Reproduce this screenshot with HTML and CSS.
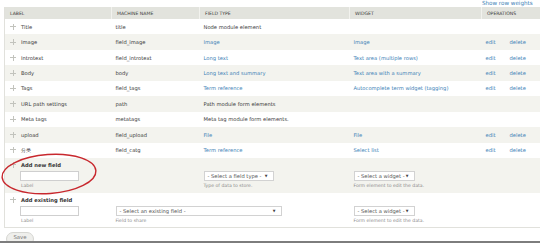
FILE: index.html
```html
<!DOCTYPE html>
<html>
<head>
  <title>Manage fields</title>
  <link rel="stylesheet" href="styles.css">
</head>
<body>
  <div class="page">
    <div class="weights-toggle"><a href="#">Show row weights</a></div>

    <table class="fields">
      <colgroup>
        <col class="c-label">
        <col class="c-machine">
        <col class="c-type">
        <col class="c-widget">
        <col class="c-edit">
        <col class="c-delete">
      </colgroup>
      <thead>
        <tr>
          <th>Label</th>
          <th>Machine name</th>
          <th>Field type</th>
          <th>Widget</th>
          <th colspan="2">Operations</th>
        </tr>
      </thead>
      <tbody>
        <tr class="odd">
          <td><span class="handle"></span>Title</td>
          <td>title</td>
          <td>Node module element</td>
          <td></td><td></td><td></td>
        </tr>
        <tr class="even">
          <td><span class="handle"></span>Image</td>
          <td>field_image</td>
          <td><a href="#">Image</a></td>
          <td><a href="#">Image</a></td>
          <td><a href="#">edit</a></td>
          <td><a href="#">delete</a></td>
        </tr>
        <tr class="odd">
          <td><span class="handle"></span>Introtext</td>
          <td>field_introtext</td>
          <td><a href="#">Long text</a></td>
          <td><a href="#">Text area (multiple rows)</a></td>
          <td><a href="#">edit</a></td>
          <td><a href="#">delete</a></td>
        </tr>
        <tr class="even">
          <td><span class="handle"></span>Body</td>
          <td>body</td>
          <td><a href="#">Long text and summary</a></td>
          <td><a href="#">Text area with a summary</a></td>
          <td><a href="#">edit</a></td>
          <td><a href="#">delete</a></td>
        </tr>
        <tr class="odd">
          <td><span class="handle"></span>Tags</td>
          <td>field_tags</td>
          <td><a href="#">Term reference</a></td>
          <td><a href="#">Autocomplete term widget (tagging)</a></td>
          <td><a href="#">edit</a></td>
          <td><a href="#">delete</a></td>
        </tr>
        <tr class="even">
          <td><span class="handle"></span>URL path settings</td>
          <td>path</td>
          <td>Path module form elements</td>
          <td></td><td></td><td></td>
        </tr>
        <tr class="odd">
          <td><span class="handle"></span>Meta tags</td>
          <td>metatags</td>
          <td>Meta tag module form elements.</td>
          <td></td><td></td><td></td>
        </tr>
        <tr class="even">
          <td><span class="handle"></span>upload</td>
          <td>field_upload</td>
          <td><a href="#">File</a></td>
          <td><a href="#">File</a></td>
          <td><a href="#">edit</a></td>
          <td><a href="#">delete</a></td>
        </tr>
        <tr class="odd">
          <td><span class="handle"></span>分类</td>
          <td>field_catg</td>
          <td><a href="#">Term reference</a></td>
          <td><a href="#">Select list</a></td>
          <td><a href="#">edit</a></td>
          <td><a href="#">delete</a></td>
        </tr>

        <tr class="even add-row">
          <td>
            <div class="add-title"><span class="handle"></span>Add new field</div>
            <div class="add-input"></div>
            <div class="desc">Label</div>
          </td>
          <td></td>
          <td>
            <div class="spacer"></div>
            <div class="select type">- Select a field type -<span class="arrow">▼</span></div>
            <div class="desc">Type of data to store.</div>
          </td>
          <td colspan="3">
            <div class="spacer"></div>
            <div class="select">- Select a widget -<span class="arrow">▼</span></div>
            <div class="desc">Form element to edit the data.</div>
          </td>
        </tr>
        <tr class="odd add-row existing">
          <td>
            <div class="add-title"><span class="handle"></span>Add existing field</div>
            <div class="add-input"></div>
            <div class="desc">Label</div>
          </td>
          <td colspan="2">
            <div class="spacer"></div>
            <div class="select wide">- Select an existing field -<span class="arrow">▼</span></div>
            <div class="desc">Field to share</div>
          </td>
          <td colspan="3">
            <div class="spacer"></div>
            <div class="select">- Select a widget -<span class="arrow">▼</span></div>
            <div class="desc">Form element to edit the data.</div>
          </td>
        </tr>
      </tbody>
    </table>

    <button class="save">Save</button>

    <svg class="highlight" width="100" height="46" viewBox="0 0 100 46">
      <ellipse cx="49" cy="23" rx="47" ry="19.5" transform="rotate(-4 49 23)" fill="none" stroke="#c8282e" stroke-width="1.4"/>
    </svg>
  </div>
</body>
</html>
```

FILE: styles.css
```css
body {
  margin: 0;
  font-family: "DejaVu Sans", Verdana, sans-serif;
  font-size: 5.2px;
  color: #3b3b3b;
  background-color: #fff;
}

a {
  color: #3d82b6;
  text-decoration: none;
}

.page {
  position: relative;
  height: 241px;
  overflow: hidden;
  border-bottom: 2px solid #7d7d7d;
}

.weights-toggle {
  height: 7px;
  padding-left: 482px;
  white-space: nowrap;
  line-height: 7px;
  font-size: 5.6px;
}

.fields {
  margin-left: 4px;
  width: 536px;
  table-layout: fixed;
  border-collapse: collapse;
  border-left: 1px solid #e1e1dc;
  border-bottom: 1px solid #e1e1dc;
}

.c-label { width: 107px; }
.c-machine { width: 88px; }
.c-type { width: 150px; }
.c-widget { width: 132px; }
.c-edit { width: 24px; }
.c-delete { width: 35px; }

th {
  height: 12px;
  padding: 0 5px;
  text-align: left;
  font-weight: normal;
  font-size: 4.6px;
  text-transform: uppercase;
  color: #3a3a3a;
  background-color: #e2e3dd;
  border-left: 1px solid #f2f2ee;
}

th:first-child {
  border-left: none;
}

td {
  height: 15.44px;
  padding: 0 4px;
  white-space: nowrap;
  overflow: hidden;
}

tr.odd td {
  background-color: #fff;
}

tr.even td {
  background-color: #f3f3ee;
}

.handle {
  display: inline-block;
  position: relative;
  width: 6px;
  height: 6px;
  margin: 0 5px 0 1px;
  vertical-align: -1px;
}

.handle::before,
.handle::after {
  content: "";
  position: absolute;
  background-color: #c2c3bd;
}

.handle::before {
  left: 0;
  top: 2.5px;
  width: 6px;
  height: 1px;
}

.handle::after {
  left: 2.5px;
  top: 0;
  width: 1px;
  height: 6px;
}

.add-row td {
  height: auto;
  vertical-align: top;
  padding-top: 3px;
  padding-bottom: 3px;
}

.add-row.existing td {
  padding-top: 3px;
  padding-bottom: 2px;
}

.add-title {
  height: 8px;
  line-height: 8px;
  font-weight: bold;
  color: #333;
}

.spacer {
  height: 8px;
}

.add-input {
  width: 57px;
  height: 8px;
  margin: 2px 0 0 11px;
  border: 1px solid #cfcfcf;
  background-color: #fff;
}

.add-row td:first-child .desc {
  margin-left: 12px;
}

.select {
  position: relative;
  width: 56px;
  height: 8px;
  margin-top: 2px;
  padding-left: 3px;
  line-height: 8px;
  color: #555;
  border: 1px solid #d2d2d2;
  background-color: #fff;
}

.select.type {
  width: 65px;
}

.select.wide {
  width: 161px;
}

.arrow {
  position: absolute;
  right: 5px;
  top: 0;
  font-size: 3.5px;
  color: #444;
}

.desc {
  height: 9px;
  line-height: 9px;
  font-size: 4.6px;
  color: #8a8a8a;
}

.save {
  display: block;
  margin: 4px 0 0 6px;
  width: 28px;
  height: 14px;
  padding: 0 0 3px 0;
  font-family: "DejaVu Sans", Verdana, sans-serif;
  font-size: 5.4px;
  color: #7a7a7a;
  background-color: #efefec;
  border: 1px solid #d6d6d2;
  border-radius: 7px;
}

.highlight {
  position: absolute;
  left: 0;
  top: 151px;
}
```
